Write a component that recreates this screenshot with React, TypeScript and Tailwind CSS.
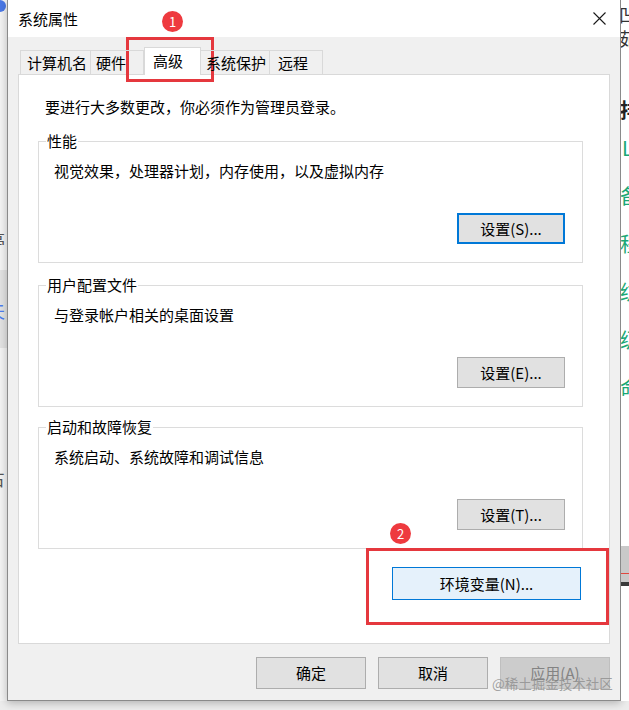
import type { ReactNode } from 'react'

function CloseIcon() {
  return (
    <svg width={13} height={13} viewBox="0 0 13 13" fill="none" aria-hidden>
      <path d="M0.5 0.5l12 12M12.5 0.5l-12 12" stroke="#1a1a1a" strokeWidth="1.1" />
    </svg>
  )
}

function Badge({ n }: { n: number }) {
  return (
    <span className="flex size-[21px] items-center justify-center rounded-full bg-[#ee3a3f] text-[13px] leading-none text-white">
      {n}
    </span>
  )
}

function WinButton({
  children,
  focused,
  disabled,
  className = '',
}: {
  children: ReactNode
  focused?: boolean
  disabled?: boolean
  className?: string
}) {
  let look = 'border border-[#adadad] bg-[#e1e1e1] text-black'
  if (focused) look = 'border-2 border-[#0078d7] bg-[#e1e1e1] text-black'
  if (disabled) look = 'border border-[#bfbfbf] bg-[#cccccc] text-[#838383]'
  return (
    <button type="button" className={`flex items-center justify-center text-[15px] leading-[20px] ${look} ${className}`}>
      {children}
    </button>
  )
}

function Group({ title, text, button, focused }: { title: string; text: string; button: string; focused?: boolean }) {
  return (
    <fieldset className="flex flex-col border border-[#dcdcdc] px-[7px] pb-[18px]">
      <legend className="px-[1px] text-[15px] leading-[20px]">{title}</legend>
      <p className="ml-[8px] mt-[10px] text-[15px] leading-[20px]">{text}</p>
      <div className="mt-[32px] flex justify-end pr-[10px]">
        <WinButton focused={focused} className="h-[31px] w-[108px]">
          {button}
        </WinButton>
      </div>
    </fieldset>
  )
}

export default function App() {
  return (
    <div className="relative h-[710px] w-[629px] overflow-hidden bg-[#ececec] font-['Noto_Sans_CJK_SC','Noto_Sans',sans-serif] text-black">
      <div className="flex h-[701px]">
        {/* desktop behind, left edge */}
        <div className="flex w-[7px] flex-col overflow-hidden bg-[#f3f3f3] text-[18px] leading-[20px] text-[#555]">
          <span className="-ml-[6px] block h-[12px] w-[12px] rounded-full bg-[#4a78e6]" />
          <span className="-ml-[13px] mt-[218px]">亭</span>
          <div className="mt-[20px] flex h-[78px] flex-col bg-[#e2e2e2]">
            <span className="-ml-[13px] mt-[30px] text-[#4d7cf0]">夫</span>
          </div>
          <span className="-ml-[13px] mt-[120px]">占</span>
        </div>

        {/* dialog */}
        <div className="flex w-[614px] flex-col border-x border-b border-[#8a8a8a] bg-[#f0f0f0] shadow-[0_2px_8px_rgba(0,0,0,0.25)]">
          <div className="flex h-[38px] items-center justify-between bg-white pl-[10px] pr-[14px]">
            <span className="text-[15px] leading-[20px]">系统属性</span>
            <CloseIcon />
          </div>

          <div className="flex flex-col px-[10px] pt-[10px]">
            <div className="relative z-10 -mb-px flex h-[28px] items-end pl-[2px] text-[15px] leading-[20px]">
              <div className="mb-px flex h-[24px] w-[71px] items-center border border-b-0 border-[#d9d9d9] pl-[6px]">计算机名</div>
              <div className="mb-px flex h-[24px] w-[53px] items-center border-r border-t border-[#d9d9d9] pl-[5px]">硬件</div>
              <div className="flex h-[28px] w-[57px] items-center border border-b-0 border-[#d9d9d9] bg-white pb-[2px] pl-[8px]">高级</div>
              <div className="mb-px flex h-[24px] w-[69px] items-center border-r border-t border-[#d9d9d9] pl-[5px]">系统保护</div>
              <div className="mb-px flex h-[24px] w-[53px] items-center border-r border-t border-[#d9d9d9] pl-[8px]">远程</div>
            </div>

            <div className="flex h-[570px] flex-col border border-[#d9d9d9] bg-white pl-[19px] pr-[26px] pt-[22px]">
              <p className="ml-[7px] text-[15px] leading-[20px]">要进行大多数更改，你必须作为管理员登录。</p>
              <div className="mt-[14px] flex flex-col">
                <Group title="性能" text="视觉效果，处理器计划，内存使用，以及虚拟内存" button="设置(S)..." focused />
              </div>
              <div className="mt-[12px] flex flex-col">
                <Group title="用户配置文件" text="与登录帐户相关的桌面设置" button="设置(E)..." />
              </div>
              <div className="mt-[10px] flex flex-col">
                <Group title="启动和故障恢复" text="系统启动、系统故障和调试信息" button="设置(T)..." />
              </div>
              <div className="mt-[18px] flex justify-end pr-[2px]">
                <button
                  type="button"
                  className="flex h-[33px] w-[189px] items-center justify-center border border-[#0078d7] bg-[#e5f1fb] text-[15px] leading-[20px]"
                >
                  环境变量(N)...
                </button>
              </div>
            </div>

            <div className="mt-[13px] flex justify-end gap-[12px] pb-[11px]">
              <WinButton className="h-[32px] w-[110px]">确定</WinButton>
              <WinButton className="h-[32px] w-[110px]">取消</WinButton>
              <WinButton disabled className="h-[32px] w-[110px]">
                应用(A)
              </WinButton>
            </div>
          </div>
        </div>

        {/* desktop behind, right edge */}
        <div className="flex flex-1 flex-col overflow-hidden bg-white text-[20px] leading-[24px]">
          <span className="-ml-[2px] mt-[2px] text-[18px] text-[#333]">凹</span>
          <span className="-ml-[2px] text-[18px] text-[#333]">茹</span>
          <span className="-ml-[1px] mt-[48px] font-bold text-[#222]">排</span>
          <div className="flex flex-col gap-[24px] pt-[14px] text-[#1aa774]">
            <span className="ml-[1px]">L</span>
            <span className="-ml-[1px]">备</span>
            <span className="-ml-[1px]">程</span>
            <span className="-ml-[1px]">纺</span>
            <span className="-ml-[1px]">级</span>
            <span className="-ml-[1px]">命</span>
          </div>
          <div className="mt-[146px] flex h-[36px] flex-col justify-end bg-[#c9c9c9]">
            <span className="mb-[8px] h-px bg-[#e0483f]" />
          </div>
          <div className="h-[4px] bg-[#3a3a3a]" />
        </div>
      </div>

      {/* annotations */}
      <div className="absolute left-[126px] top-[37px] h-[45px] w-[88px] border-[3px] border-[#e5383e]" />
      <div className="absolute left-[162px] top-[11px]">
        <Badge n={1} />
      </div>
      <div className="absolute left-[366px] top-[548px] h-[77px] w-[243px] border-[3px] border-[#e5383e]" />
      <div className="absolute left-[390px] top-[523px]">
        <Badge n={2} />
      </div>
      <span className="absolute left-[492px] top-[674px] text-[13.5px] leading-[18px] text-[#8c8c8c]/80">@稀土掘金技术社区</span>
    </div>
  )
}
